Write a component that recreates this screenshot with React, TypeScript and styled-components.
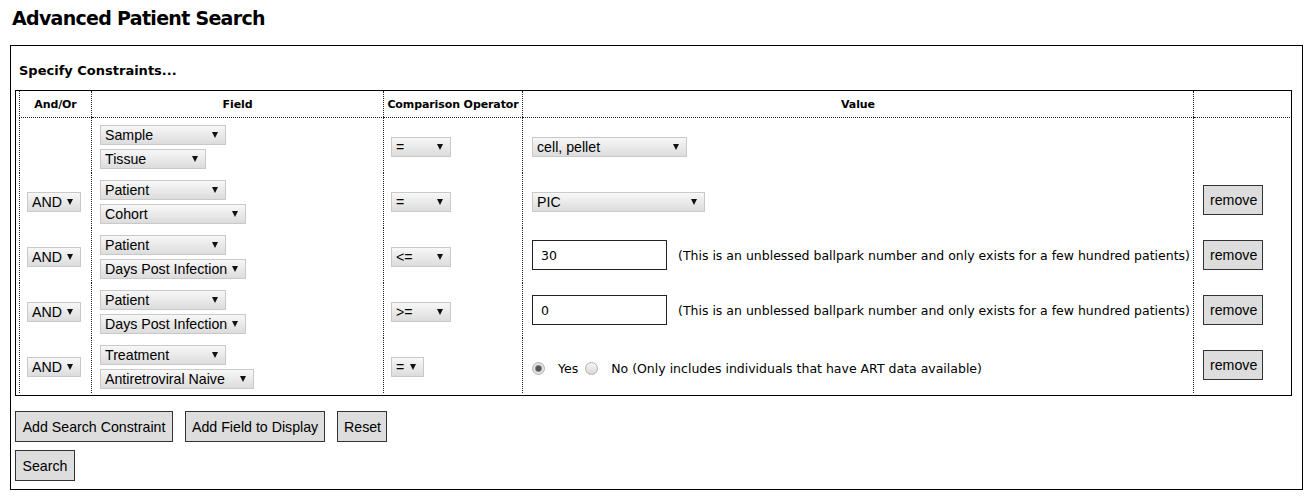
import styled, { createGlobalStyle } from 'styled-components';

const GlobalStyle = createGlobalStyle`
  body {
    margin: 0;
    background: #fff;
    color: #000;
    font-family: "DejaVu Sans", Verdana, sans-serif;
  }
`;

const Page = styled.div`
  padding: 6px 0 0 0;
`;

const Title = styled.h1`
  margin: 0 0 15px 12px;
  font-size: 19px;
  line-height: 24px;
  font-weight: bold;
  letter-spacing: -0.7px;
`;

const Panel = styled.div`
  box-sizing: border-box;
  width: 1293px;
  margin-left: 10px;
  border: 1px solid #000;
  padding: 17px 4px 8px 4px;
`;

const SectionTitle = styled.h2`
  margin: 0 0 11px 4px;
  font-size: 13px;
  line-height: 16px;
  font-weight: bold;
`;

const TableFrame = styled.div`
  box-sizing: border-box;
  width: 1277px;
  border: 1px solid #000;
  padding: 0 1px 2px 3px;
`;

const Grid = styled.table`
  width: 100%;
  table-layout: fixed;
  border-collapse: collapse;
`;

const HeadCell = styled.th`
  height: 26px;
  padding: 0;
  border-left: 1px dotted #222;
  border-bottom: 1px dotted #222;
  font-size: 11px;
  font-weight: bold;
  letter-spacing: -0.1px;
  text-align: center;
  vertical-align: middle;
`;

const Cell = styled.td<{ $pad?: number }>`
  padding: 7px 4px 4px ${(p) => p.$pad ?? 7}px;
  border-left: 1px dotted #222;
  vertical-align: middle;
  font-size: 12.5px;
`;

const FieldStack = styled.div`
  display: flex;
  flex-direction: column;
  align-items: flex-start;
  gap: 4px;
`;

const SelectWrap = styled.span<{ $w: number }>`
  position: relative;
  display: inline-block;
  vertical-align: middle;
  width: ${(p) => p.$w}px;
  height: 20px;

  &::after {
    content: '';
    position: absolute;
    right: 8px;
    top: 7px;
    border-left: 3px solid transparent;
    border-right: 3px solid transparent;
    border-top: 6px solid #111;
    pointer-events: none;
  }
`;

const NativeSelect = styled.select`
  appearance: none;
  -webkit-appearance: none;
  box-sizing: border-box;
  width: 100%;
  height: 20px;
  margin: 0;
  padding: 0 16px 0 4px;
  border: 1px solid #c9c9c9;
  border-radius: 0;
  background: linear-gradient(#f7f7f7, #dcdcdc);
  color: #000;
  font: 14.2px "Liberation Sans", Arial, sans-serif;
`;

const ValueLine = styled.div`
  display: flex;
  align-items: center;
  gap: 11px;
  margin-bottom: 4px;
`;

const NumberInput = styled.input`
  box-sizing: border-box;
  width: 135px;
  height: 30px;
  margin: 0;
  padding: 0 8px;
  border: 1px solid #222;
  font: 12.5px "DejaVu Sans", Verdana, sans-serif;
  color: #000;
`;

const Note = styled.span`
  white-space: nowrap;
`;

const RadioGroup = styled.div`
  display: flex;
  align-items: center;
  padding-top: 3px;
`;

const Radio = styled.span<{ $on?: boolean }>`
  box-sizing: border-box;
  display: inline-block;
  width: 13px;
  height: 13px;
  border-radius: 50%;
  border: 1px solid #b4b4b4;
  background: ${(p) =>
    p.$on
      ? 'radial-gradient(circle, #555 0 2.5px, #888 3px, #e4e4e4 4px, #d6d6d6 100%)'
      : 'linear-gradient(#f6f6f6, #d8d8d8)'};
  margin-right: 13px;
`;

const RadioText = styled.span`
  margin-right: 7px;
  white-space: nowrap;
`;

const Button = styled.button<{ $h?: number }>`
  box-sizing: border-box;
  height: ${(p) => p.$h ?? 31}px;
  margin: 0;
  padding: 0 6px;
  border: 1px solid #333;
  border-radius: 0;
  background: #dddddd;
  color: #000;
  font: 14.2px "Liberation Sans", Arial, sans-serif;
  white-space: nowrap;
`;

const RemoveButton = styled(Button)`
  display: block;
  width: 60px;
  margin: 0 0 4px 2px;
`;

const Actions = styled.div`
  display: flex;
  flex-direction: column;
  align-items: flex-start;
  gap: 8px;
  margin-top: 15px;
`;

const ActionRow = styled.div`
  display: flex;
  gap: 12px;
`;

type Opt = { label: string; w: number };

const Dropdown = ({ label, w }: Opt) => (
  <SelectWrap $w={w}>
    <NativeSelect defaultValue={label}>
      <option>{label}</option>
    </NativeSelect>
  </SelectWrap>
);

type Row = {
  andOr: boolean;
  table: Opt;
  field: Opt;
  op: Opt;
  value: 'select' | 'number' | 'radio';
  valueOpt?: Opt;
  num?: string;
  removable: boolean;
};

const NOTE =
  '(This is an unblessed ballpark number and only exists for a few hundred patients)';

const rows: Row[] = [
  {
    andOr: false,
    table: { label: 'Sample', w: 126 },
    field: { label: 'Tissue', w: 106 },
    op: { label: '=', w: 60 },
    value: 'select',
    valueOpt: { label: 'cell, pellet', w: 155 },
    removable: false,
  },
  {
    andOr: true,
    table: { label: 'Patient', w: 126 },
    field: { label: 'Cohort', w: 146 },
    op: { label: '=', w: 60 },
    value: 'select',
    valueOpt: { label: 'PIC', w: 173 },
    removable: true,
  },
  {
    andOr: true,
    table: { label: 'Patient', w: 126 },
    field: { label: 'Days Post Infection', w: 146 },
    op: { label: '<=', w: 60 },
    value: 'number',
    num: '30',
    removable: true,
  },
  {
    andOr: true,
    table: { label: 'Patient', w: 126 },
    field: { label: 'Days Post Infection', w: 146 },
    op: { label: '>=', w: 60 },
    value: 'number',
    num: '0',
    removable: true,
  },
  {
    andOr: true,
    table: { label: 'Treatment', w: 126 },
    field: { label: 'Antiretroviral Naive', w: 154 },
    op: { label: '=', w: 33 },
    value: 'radio',
    removable: true,
  },
];

const ValueCell = ({ row }: { row: Row }) => {
  if (row.value === 'select' && row.valueOpt) return <Dropdown {...row.valueOpt} />;
  if (row.value === 'number')
    return (
      <ValueLine>
        <NumberInput type="text" defaultValue={row.num} />
        <Note>{NOTE}</Note>
      </ValueLine>
    );
  return (
    <RadioGroup>
      <Radio $on />
      <RadioText>Yes</RadioText>
      <Radio />
      <RadioText>No (Only includes individuals that have ART data available)</RadioText>
    </RadioGroup>
  );
};

const App = () => {
  return (
    <>
      <GlobalStyle />
      <Page>
        <Title>Advanced Patient Search</Title>
        <Panel>
          <SectionTitle>Specify Constraints...</SectionTitle>
          <TableFrame>
            <Grid>
              <colgroup>
                <col style={{ width: 72 }} />
                <col style={{ width: 292 }} />
                <col style={{ width: 139 }} />
                <col style={{ width: 671 }} />
                <col />
              </colgroup>
              <thead>
                <tr>
                  <HeadCell>And/Or</HeadCell>
                  <HeadCell>Field</HeadCell>
                  <HeadCell>Comparison Operator</HeadCell>
                  <HeadCell>Value</HeadCell>
                  <HeadCell />
                </tr>
              </thead>
              <tbody>
                {rows.map((row, i) => (
                  <tr key={i}>
                    <Cell>{row.andOr && <Dropdown label="AND" w={54} />}</Cell>
                    <Cell $pad={8}>
                      <FieldStack>
                        <Dropdown {...row.table} />
                        <Dropdown {...row.field} />
                      </FieldStack>
                    </Cell>
                    <Cell>
                      <Dropdown {...row.op} />
                    </Cell>
                    <Cell $pad={9}>
                      <ValueCell row={row} />
                    </Cell>
                    <Cell $pad={7}>{row.removable && <RemoveButton $h={30}>remove</RemoveButton>}</Cell>
                  </tr>
                ))}
              </tbody>
            </Grid>
          </TableFrame>
          <Actions>
            <ActionRow>
              <Button style={{ width: 158 }}>Add Search Constraint</Button>
              <Button style={{ width: 140 }}>Add Field to Display</Button>
              <Button style={{ width: 50 }}>Reset</Button>
            </ActionRow>
            <Button style={{ width: 60 }}>Search</Button>
          </Actions>
        </Panel>
      </Page>
    </>
  );
};

export default App;
